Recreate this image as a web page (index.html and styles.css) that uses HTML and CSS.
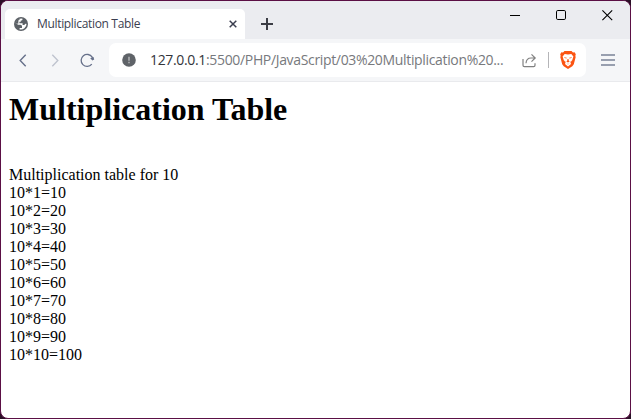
FILE: index.html
```html
<!DOCTYPE html>
<html lang="en">
<head>
<meta charset="utf-8">
<title>Multiplication Table</title>
<link rel="stylesheet" href="styles.css">
</head>
<body>
<div class="window">
  <div class="tabstrip">
    <div class="tab">
      <svg class="globe" width="14" height="14" viewBox="0 0 14 14"><circle cx="7" cy="7" r="7" fill="#5b6066"/><path d="M8.6 1.7C8.6 3 8 3.5 6.8 3.5V4.8H5.4V6.2H8.6V7.9H10.4C10.9 6.8 11.5 6.6 12.5 6.9A5.6 5.6 0 0 1 5.6 12.4V11H8V9.5C8 8.5 7.4 7.7 6.3 7.7H3.8C3.2 6.7 2.5 6.3 1.6 6.3A5.6 5.6 0 0 1 8.6 1.7Z" fill="#fff"/><path d="M1.6 6.3A5.6 5.6 0 0 1 6.6 1.4L4.4 3.6 4.3 6.8Z" fill="#5b6066"/></svg>
      <span class="tab-title">Multiplication Table</span>
      <svg class="tab-close" width="8" height="8" viewBox="0 0 8 8"><path d="M.7.7 7.3 7.3M7.3.7.7 7.3" stroke="#3b3e4f" stroke-width="1.5"/></svg>
    </div>
    <svg class="plus" width="12" height="12" viewBox="0 0 12 12"><path d="M6 0V12M0 6H12" stroke="#3b3d45" stroke-width="2"/></svg>
    <div class="controls">
      <svg width="11" height="11" viewBox="0 0 11 11"><path d="M0 5.5H10" stroke="#000"/></svg>
      <svg width="11" height="11" viewBox="0 0 11 11"><rect x=".5" y=".5" width="9" height="9" rx="1.3" fill="none" stroke="#000"/></svg>
      <svg width="11" height="11" viewBox="0 0 11 11"><path d="M.4.4 10.2 10.2M10.2.4.4 10.2" stroke="#000" stroke-width="1.1"/></svg>
    </div>
  </div>
  <div class="toolbar">
    <svg class="back" width="8" height="13" viewBox="0 0 8 13"><path d="M6.7.8 1.2 6.5 6.7 12.2" fill="none" stroke="#66708a" stroke-width="1.4"/></svg>
    <svg class="forward" width="8" height="13" viewBox="0 0 8 13"><path d="M1.3.8 6.8 6.5 1.3 12.2" fill="none" stroke="#bfc4cf" stroke-width="1.4"/></svg>
    <svg class="reload" width="15" height="15" viewBox="0 0 15 15"><path d="M11.8 11.2A6 6 0 1 1 12.2 4.2L12.6 5.6" fill="none" stroke="#66708a" stroke-width="1.3"/><path d="M10.2 5.2 13.6 4 14.2 6.6 12.4 7.6Z" fill="#66708a"/></svg>
    <div class="address">
      <svg class="info" width="14" height="14" viewBox="0 0 14 14"><circle cx="7" cy="7" r="6.8" fill="#5f6368"/><path d="M7 3.8V7.7M7 8.8V10.3" stroke="#b9bbbd" stroke-width="1.4"/></svg>
      <span class="url"><b>127.0.0.1</b>:5500/PHP/JavaScript/03%20Multiplication%20...</span>
      <svg class="share" width="15" height="15" viewBox="0 0 15 15"><path d="M1 6V12.3Q1 13.6 2.3 13.6H11.7Q13 13.6 13 12.3V10.3M4 10.2Q4.4 5 9 5H13M9.5 1.4 13.2 5 9.5 8.6" fill="none" stroke="#808080" stroke-width="1.2"/></svg>
      <span class="divider"></span>
      <svg class="lion" width="16" height="18" viewBox="0 0 16 18"><path d="M4.5 0H11.5L13 1.4 14.6 1.3 15.8 3.3 15.3 5 15.7 6 13.8 13.2 12.3 15.2 8 18 3.7 15.2 2.2 13.2.3 6 .7 5 .2 3.3 1.4 1.3 3 1.4Z" fill="#fb5413"/><path d="M4.7 3 8 3.5 11.3 3 13.4 5.6 12.2 9.2 10.5 11.5 11 13 8 15.5 5 13 5.5 11.5 3.8 9.2 2.6 5.6Z" fill="#fff"/><path d="M4 6.3 6.8 6.7 6.5 7.4 4.6 7ZM12 6.3 9.2 6.7 9.5 7.4 11.4 7ZM7.5 8 7.2 9.8 6.3 10.5 8 11.4 9.7 10.5 8.8 9.8 8.5 8M6.3 12.3 8 12.9 9.7 12.3 8 13.4ZM4 9.4 5.6 10.8 5.2 11.6ZM12 9.4 10.4 10.8 10.8 11.6Z" fill="#fb5413"/></svg>
    </div>
    <svg class="menu" width="14" height="12" viewBox="0 0 14 12"><path d="M0 1H14M0 6H14M0 11H14" stroke="#7a8296" stroke-width="1.4"/></svg>
  </div>
  <main class="page">
    <h1>Multiplication Table</h1>
    <br>
    Multiplication table for 10<br>
    10*1=10<br>
    10*2=20<br>
    10*3=30<br>
    10*4=40<br>
    10*5=50<br>
    10*6=60<br>
    10*7=70<br>
    10*8=80<br>
    10*9=90<br>
    10*10=100
  </main>
</div>
</body>
</html>
```
FILE: styles.css
```css
* { box-sizing: border-box; }
body { margin: 0; background: #2b1027; overflow: hidden; }
svg { display: block; flex: none; }
.window {
  width: 631px;
  height: 419px;
  border: 1px solid #5b0f45;
  border-radius: 8px;
  background: #fff;
  overflow: hidden;
  display: flex;
  flex-direction: column;
  font-family: "Open Sans", "Noto Sans", sans-serif;
}
.tabstrip {
  height: 38px;
  flex: none;
  background: #ebecf0;
  display: flex;
  padding: 8px 0 0 4px;
}
.tab {
  width: 240px;
  height: 30px;
  background: #fff;
  border-radius: 5px 5px 0 0;
  display: flex;
  align-items: center;
  padding: 0 8px 0 9px;
}
.tab-title {
  flex: 1;
  margin-left: 9px;
  font-size: 12px;
  line-height: 16px;
  letter-spacing: -0.33px;
  color: #3b3e4f;
  white-space: nowrap;
}
.plus { margin: 9px 0 0 16px; }
.controls {
  display: flex;
  gap: 35px;
  margin: 1px 0 0 auto;
  padding-right: 17px;
}
.toolbar {
  height: 43px;
  flex: none;
  background: #f5f6f8;
  border-bottom: 1px solid #e9eaed;
  display: flex;
  align-items: center;
  padding: 0 15px 0 18px;
}
.forward { margin-left: 24px; }
.reload { margin-left: 21px; }
.address {
  width: 477px;
  height: 34px;
  margin-left: 14px;
  border-radius: 7px;
  background: #fff;
  display: flex;
  align-items: center;
  padding: 0 10px 0 13px;
}
.url {
  width: 358px;
  margin-left: 14px;
  font-size: 14px;
  line-height: 20px;
  letter-spacing: -0.34px;
  color: #77797d;
  white-space: nowrap;
}
.url b { font-weight: 400; color: #33353b; }
.share { margin-left: 14px; }
.divider { width: 1px; height: 16px; margin-left: 11px; background: #b5b5b8; }
.lion { margin-left: auto; }
.menu { margin-left: auto; }
.page {
  padding: 9px 8px;
  font-family: "Liberation Serif", serif;
  font-size: 16px;
  line-height: 18px;
  color: #000;
}
.page h1 {
  margin: 0 0 21px;
  font-size: 32px;
  line-height: 36px;
}
```
